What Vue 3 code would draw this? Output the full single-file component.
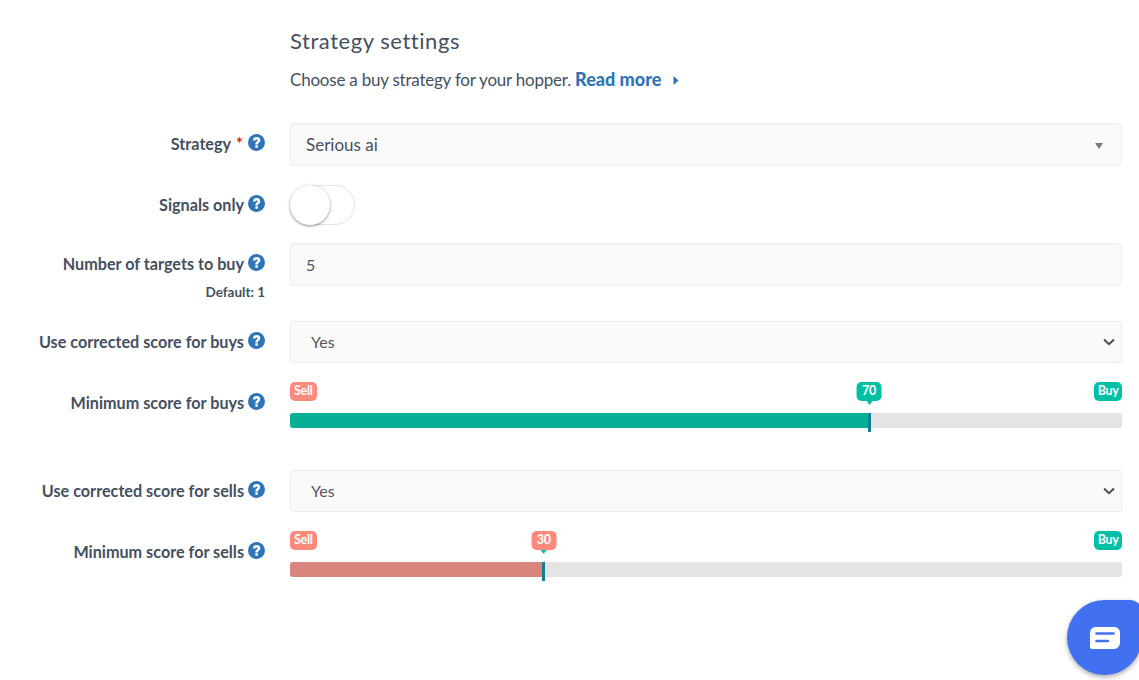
<script setup>
const sliders = {
  buys: { value: 70, pct: 69.6, kind: 'buy' },
  sells: { value: 30, pct: 30.5, kind: 'sell' },
}
</script>

<template>
  <main class="page">
    <section class="head">
      <h2>Strategy settings</h2>
      <p>Choose a buy strategy for your hopper. <a class="more">Read more
        <svg class="caret" viewBox="0 0 6 10" width="6" height="11"><path d="M0.5 0.5 L5.5 5 L0.5 9.5 Z" fill="#2f75b5"/></svg></a></p>
    </section>

    <div class="row r-strategy">
      <label class="lab">Strategy <span class="req">*</span>
        <svg class="help" viewBox="0 0 18 18"><circle cx="9" cy="9" r="9" fill="#2f75b5"/><path d="M5.2 6.8 C5.4 4.4 7.1 3.2 9.2 3.2 C11.4 3.2 13 4.5 13 6.5 C13 9 10.6 9 10.4 11 H7.8 C7.7 8.2 10.2 8 10.2 6.7 C10.2 6.1 9.8 5.7 9.1 5.7 C8.3 5.7 7.9 6.2 7.8 6.9 Z M7.8 12 H10.4 V14.6 H7.8 Z" fill="#fff"/></svg>
      </label>
      <div class="field sel2"><span>Serious ai</span><i class="tri"></i></div>
    </div>

    <div class="row r-toggle">
      <label class="lab">Signals only
        <svg class="help" viewBox="0 0 18 18"><circle cx="9" cy="9" r="9" fill="#2f75b5"/><path d="M5.2 6.8 C5.4 4.4 7.1 3.2 9.2 3.2 C11.4 3.2 13 4.5 13 6.5 C13 9 10.6 9 10.4 11 H7.8 C7.7 8.2 10.2 8 10.2 6.7 C10.2 6.1 9.8 5.7 9.1 5.7 C8.3 5.7 7.9 6.2 7.8 6.9 Z M7.8 12 H10.4 V14.6 H7.8 Z" fill="#fff"/></svg>
      </label>
      <div class="toggle"><span class="knob"></span></div>
    </div>

    <div class="row r-number">
      <div class="lab-wrap">
        <label class="lab">Number of targets to buy
          <svg class="help" viewBox="0 0 18 18"><circle cx="9" cy="9" r="9" fill="#2f75b5"/><path d="M5.2 6.8 C5.4 4.4 7.1 3.2 9.2 3.2 C11.4 3.2 13 4.5 13 6.5 C13 9 10.6 9 10.4 11 H7.8 C7.7 8.2 10.2 8 10.2 6.7 C10.2 6.1 9.8 5.7 9.1 5.7 C8.3 5.7 7.9 6.2 7.8 6.9 Z M7.8 12 H10.4 V14.6 H7.8 Z" fill="#fff"/></svg>
        </label>
        <small>Default: 1</small>
      </div>
      <div class="field num"><span>5</span></div>
    </div>

    <div class="row r-pick">
      <label class="lab">Use corrected score for buys
        <svg class="help" viewBox="0 0 18 18"><circle cx="9" cy="9" r="9" fill="#2f75b5"/><path d="M5.2 6.8 C5.4 4.4 7.1 3.2 9.2 3.2 C11.4 3.2 13 4.5 13 6.5 C13 9 10.6 9 10.4 11 H7.8 C7.7 8.2 10.2 8 10.2 6.7 C10.2 6.1 9.8 5.7 9.1 5.7 C8.3 5.7 7.9 6.2 7.8 6.9 Z M7.8 12 H10.4 V14.6 H7.8 Z" fill="#fff"/></svg>
      </label>
      <div class="field pick"><span>Yes</span>
        <svg class="chev" viewBox="0 0 12 8" width="12" height="8"><path d="M1 1.5 L6 6.2 L11 1.5" fill="none" stroke="#4a4a55" stroke-width="2"/></svg>
      </div>
    </div>

    <div class="row r-slider">
      <label class="lab slab">Minimum score for buys
        <svg class="help" viewBox="0 0 18 18"><circle cx="9" cy="9" r="9" fill="#2f75b5"/><path d="M5.2 6.8 C5.4 4.4 7.1 3.2 9.2 3.2 C11.4 3.2 13 4.5 13 6.5 C13 9 10.6 9 10.4 11 H7.8 C7.7 8.2 10.2 8 10.2 6.7 C10.2 6.1 9.8 5.7 9.1 5.7 C8.3 5.7 7.9 6.2 7.8 6.9 Z M7.8 12 H10.4 V14.6 H7.8 Z" fill="#fff"/></svg>
      </label>
      <div class="slider">
        <div class="tags">
          <span class="tag sell">Sell</span>
          <span class="tag buy">Buy</span>
          <span class="tag buy val" :style="{ left: sliders.buys.pct + '%' }">{{ sliders.buys.value }}</span>
        </div>
        <div class="track">
          <div class="fill fill-buy" :style="{ width: sliders.buys.pct + '%' }"></div>
          <i class="thumb" :style="{ left: sliders.buys.pct + '%' }"></i>
        </div>
      </div>
    </div>

    <div class="row r-pick2">
      <label class="lab">Use corrected score for sells
        <svg class="help" viewBox="0 0 18 18"><circle cx="9" cy="9" r="9" fill="#2f75b5"/><path d="M5.2 6.8 C5.4 4.4 7.1 3.2 9.2 3.2 C11.4 3.2 13 4.5 13 6.5 C13 9 10.6 9 10.4 11 H7.8 C7.7 8.2 10.2 8 10.2 6.7 C10.2 6.1 9.8 5.7 9.1 5.7 C8.3 5.7 7.9 6.2 7.8 6.9 Z M7.8 12 H10.4 V14.6 H7.8 Z" fill="#fff"/></svg>
      </label>
      <div class="field pick"><span>Yes</span>
        <svg class="chev" viewBox="0 0 12 8" width="12" height="8"><path d="M1 1.5 L6 6.2 L11 1.5" fill="none" stroke="#4a4a55" stroke-width="2"/></svg>
      </div>
    </div>

    <div class="row r-slider">
      <label class="lab slab">Minimum score for sells
        <svg class="help" viewBox="0 0 18 18"><circle cx="9" cy="9" r="9" fill="#2f75b5"/><path d="M5.2 6.8 C5.4 4.4 7.1 3.2 9.2 3.2 C11.4 3.2 13 4.5 13 6.5 C13 9 10.6 9 10.4 11 H7.8 C7.7 8.2 10.2 8 10.2 6.7 C10.2 6.1 9.8 5.7 9.1 5.7 C8.3 5.7 7.9 6.2 7.8 6.9 Z M7.8 12 H10.4 V14.6 H7.8 Z" fill="#fff"/></svg>
      </label>
      <div class="slider">
        <div class="tags">
          <span class="tag sell">Sell</span>
          <span class="tag buy">Buy</span>
          <span class="tag sell val" :style="{ left: sliders.sells.pct + '%' }">{{ sliders.sells.value }}</span>
        </div>
        <div class="track">
          <div class="fill fill-sell" :style="{ width: sliders.sells.pct + '%' }"></div>
          <i class="thumb" :style="{ left: sliders.sells.pct + '%' }"></i>
        </div>
      </div>
    </div>

    <button class="chat" aria-label="Chat">
      <svg viewBox="0 0 30 22" width="30" height="22"><path d="M6 0 H24 C27.5 0 30 2.5 30 6 V15 C30 19 27.5 22 24 22 H2 C0.8 22 0 21.2 0 20 V6 C0 2.5 2.5 0 6 0 Z" fill="#fff"/><path d="M6.5 6.5 H23.5 M6.5 14 H18" stroke="#4170f0" stroke-width="2.6" stroke-linecap="round"/></svg>
    </button>
  </main>
</template>

<style scoped>
.page {
  box-sizing: border-box;
  width: 1139px;
  height: 680px;
  overflow: hidden;
  position: relative;
  padding: 0 17px 0 0;
  color: #45505e;
  font-family: Lato, "Noto Sans", sans-serif;
}
.head { margin-left: 290px; padding-top: 27px; height: 123px; box-sizing: border-box; }
.head h2 { margin: 0; font: 400 22px/27px Lato, sans-serif; color: #45505e; letter-spacing: 0.55px; }
.head p { margin: 14px 0 0; font: 400 17px/22px Lato, sans-serif; letter-spacing: -0.22px; }
.more { color: #2f75b5; font-weight: 900; font-size: 18px; letter-spacing: 0; }
.caret { margin-left: 7px; }
.row { display: grid; grid-template-columns: 265px 832px; column-gap: 25px; align-items: start; }
.lab {
  display: flex; justify-content: flex-end; align-items: center; gap: 4px;
  font: 700 16.2px/22px Lato, sans-serif;
  white-space: nowrap;
}
.req { color: #e01818; margin-left: 1px; margin-right: 1px; }
.help { width: 17px; height: 17px; flex: none; margin-top: -4px; }
.field {
  box-sizing: border-box; height: 43px;
  border: 1px solid #ededed; border-radius: 3px; background: #fafafa;
  display: flex; align-items: center; justify-content: space-between;
  font: 400 16px/22px Lato, sans-serif;
}
.sel2 { padding: 0 18px 0 15px; color: #45505e; font-size: 17px; }
.tri { width: 0; height: 0; border: 4.5px solid transparent; border-top: 6px solid #7a7a85; border-bottom: 0; margin-top: 3px; }
.r-strategy .lab { margin-top: 10px; }
.r-toggle { margin-top: 19px; }
.r-toggle .lab { margin-top: 9px; }
.toggle {
  box-sizing: border-box; width: 65px; height: 40px; border: 1px solid #e3e3e3;
  border-radius: 20px; background: #fff; position: relative;
}
.knob {
  position: absolute; left: -1px; top: -1px; width: 40px; height: 40px; border-radius: 50%;
  background: #fff; box-shadow: 0 1px 3px rgba(0,0,0,.45);
}
.r-number { margin-top: 18px; }
.lab-wrap { margin-top: 10px; display: flex; flex-direction: column; align-items: flex-end; }
.lab-wrap small { font: 700 13.5px/16px Lato, sans-serif; margin-top: 9px; color: #45505e; }
.num { padding: 0 15px 0 15px; color: #555; }
.r-pick { margin-top: 21px; }
.r-pick .lab, .r-pick2 .lab { margin-top: 10px; }
.r-pick2 { margin-top: 39px; }
.pick { padding: 0 6px 0 20px; height: 42px; color: #555; }
.r-slider { margin-top: 19px; }
.slab { margin-top: 10px; }
.slider { height: 49px; }
.tags { position: relative; height: 20px; display: flex; justify-content: space-between; }
.tag {
  box-sizing: border-box; height: 19px; padding: 0 3.5px; border-radius: 5px;
  font: 700 12.5px/18px Lato, sans-serif; color: #fff; letter-spacing: -0.3px;
}
.sell { background: #fb8a7c; padding: 0 4px; }
.buy { background: #00bfa5; }
.val { position: absolute; top: 0; transform: translateX(-50%); padding: 0 5.5px; }
.val::after {
  content: ""; position: absolute; left: 50%; bottom: -4px; margin-left: -3px;
  border: 3px solid transparent; border-top: 4px solid; border-bottom: 0; border-top-color: #00bfa5;
}
.track { position: relative; margin-top: 11px; height: 15px; background: #e4e4e4; border-radius: 3px; }
.fill { height: 100%; border-radius: 3px 0 0 3px; }
.fill-buy { background: #05b097; }
.fill-sell { background: #d8857e; }
.thumb { position: absolute; top: 0; height: 19px; width: 3px; margin-left: -1.5px; background: #12808f; }
.chat {
  position: absolute; left: 1067px; top: 600px; width: 75px; height: 75px; padding: 0; border: 0;
  border-radius: 50% 12px 50% 50%; background: #4170f0;
  box-shadow: 0 2px 5px rgba(0,0,0,.35);
  display: flex; align-items: center; justify-content: center;
}
</style>
